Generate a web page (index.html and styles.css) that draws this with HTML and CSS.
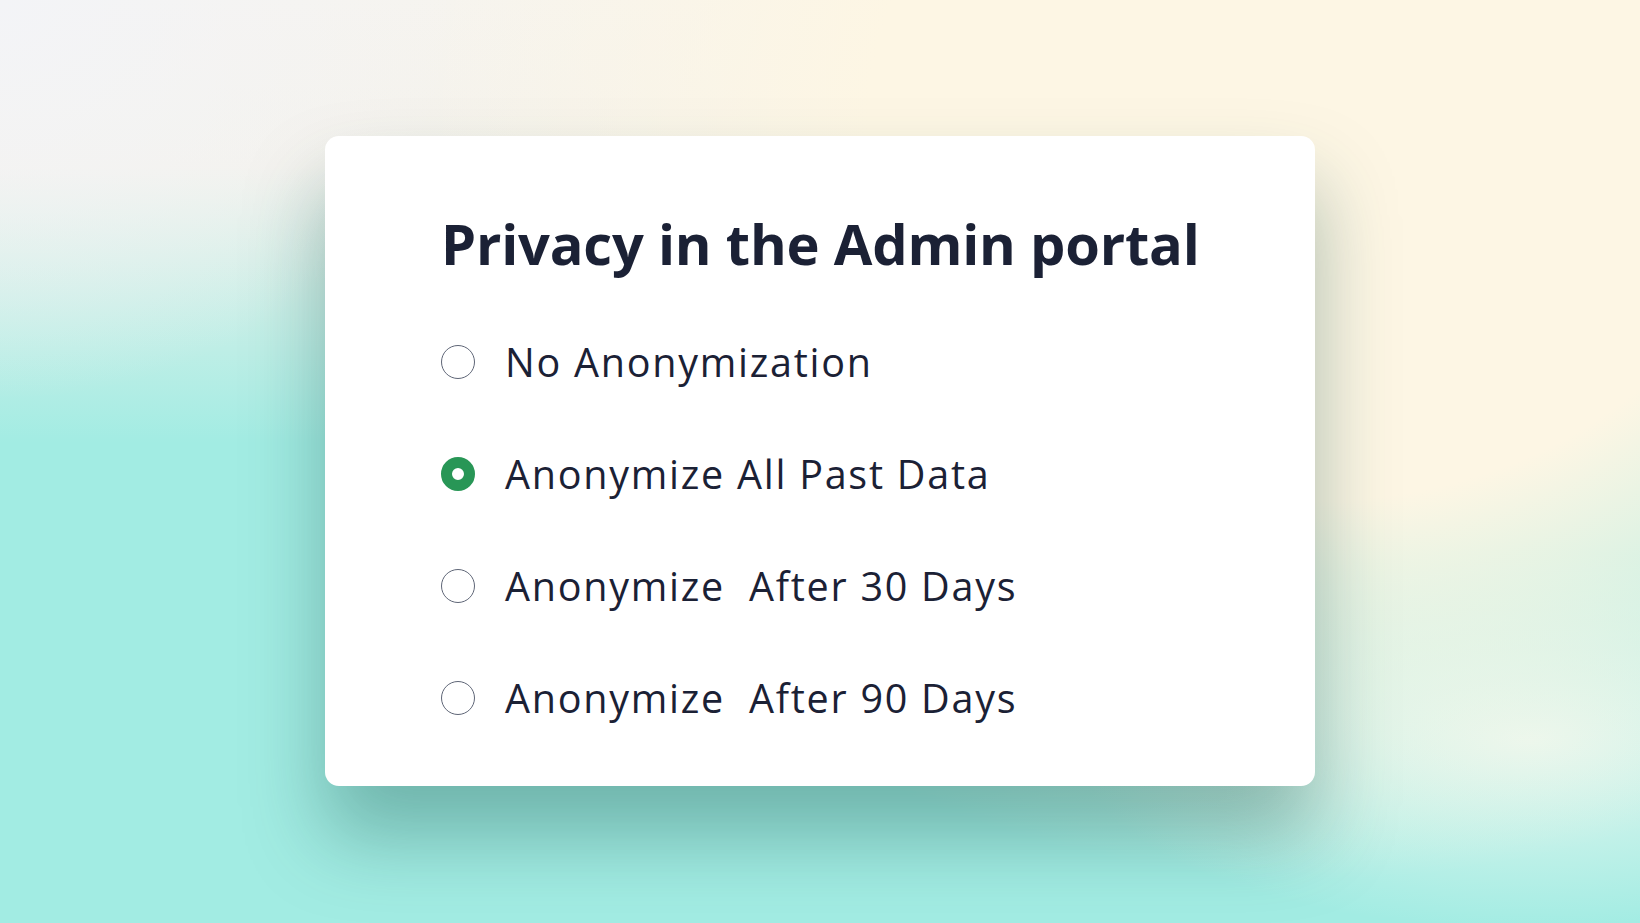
FILE: index.html
```html
<!DOCTYPE html>
<html lang="en">
<head>
    <meta charset="UTF-8">
    <meta name="viewport" content="width=device-width, initial-scale=1.0">
    <title>Privacy in the Admin portal</title>
    <link rel="stylesheet" href="styles.css">
</head>
<body>

<div class="stage">
    <div class="card">
        <h2 class="title">Privacy in the Admin portal</h2>
        <form class="options">
            <label class="option">
                <input type="radio" name="privacy" value="none">
                <span class="dot"></span>
                <span class="text">No Anonymization</span>
            </label>
            <label class="option">
                <input type="radio" name="privacy" value="all" checked>
                <span class="dot"></span>
                <span class="text">Anonymize All Past Data</span>
            </label>
            <label class="option">
                <input type="radio" name="privacy" value="30">
                <span class="dot"></span>
                <span class="text">Anonymize&nbsp; After 30 Days</span>
            </label>
            <label class="option">
                <input type="radio" name="privacy" value="90">
                <span class="dot"></span>
                <span class="text">Anonymize&nbsp; After 90 Days</span>
            </label>
        </form>
    </div>
</div>

</body>
</html>
```

FILE: styles.css
```css
html, body {
    margin: 0;
    height: 100%;
}
body {
    font-family: "Open Sans", "Noto Sans", sans-serif;
    color: #1b2135;
    background-color: #a2ece3;
    background-image:
        radial-gradient(ellipse 460px 400px at 0 0, #f3f4f7 0%, rgba(243, 244, 247, 0) 100%),
        radial-gradient(ellipse 900px 760px at 1320px 120px, #fdf6e4 0%, #fdf6e4 50%, rgba(253, 246, 228, 0) 100%),
        radial-gradient(ellipse 460px 190px at 1530px 740px, #e6f7ef 0%, rgba(230, 247, 239, 0) 100%),
        linear-gradient(to bottom, #f6f4ef 0%, #f4f2ec 18%, rgba(244, 242, 236, 0) 48%);
    overflow: hidden;
}
.stage {
    padding: 136px 0 0 325px;
}
.card {
    width: 990px;
    height: 650px;
    box-sizing: border-box;
    background: white;
    border-radius: 14px;
    padding: 71px 0 0 116px;
    box-shadow: 0 50px 80px rgba(15, 75, 65, 0.35);
}
.title {
    margin: 0;
    font-size: 56px;
    font-weight: 700;
    letter-spacing: -0.2px;
    line-height: 72px;
}
.options {
    margin-top: 63px;
    display: flex;
    flex-direction: column;
    gap: 72px;
}
.option {
    display: flex;
    align-items: center;
    height: 40px;
    cursor: pointer;
}
.option input {
    display: none;
}
.dot {
    width: 34px;
    height: 34px;
    box-sizing: border-box;
    border: 1.5px solid #5f6677;
    border-radius: 50%;
    margin-right: 30px;
    flex-shrink: 0;
}
.option input:checked + .dot {
    border: 11px solid #289656;
}
.text {
    font-size: 39.5px;
    line-height: 40px;
    letter-spacing: 1.75px;
    white-space: pre;
}
```
